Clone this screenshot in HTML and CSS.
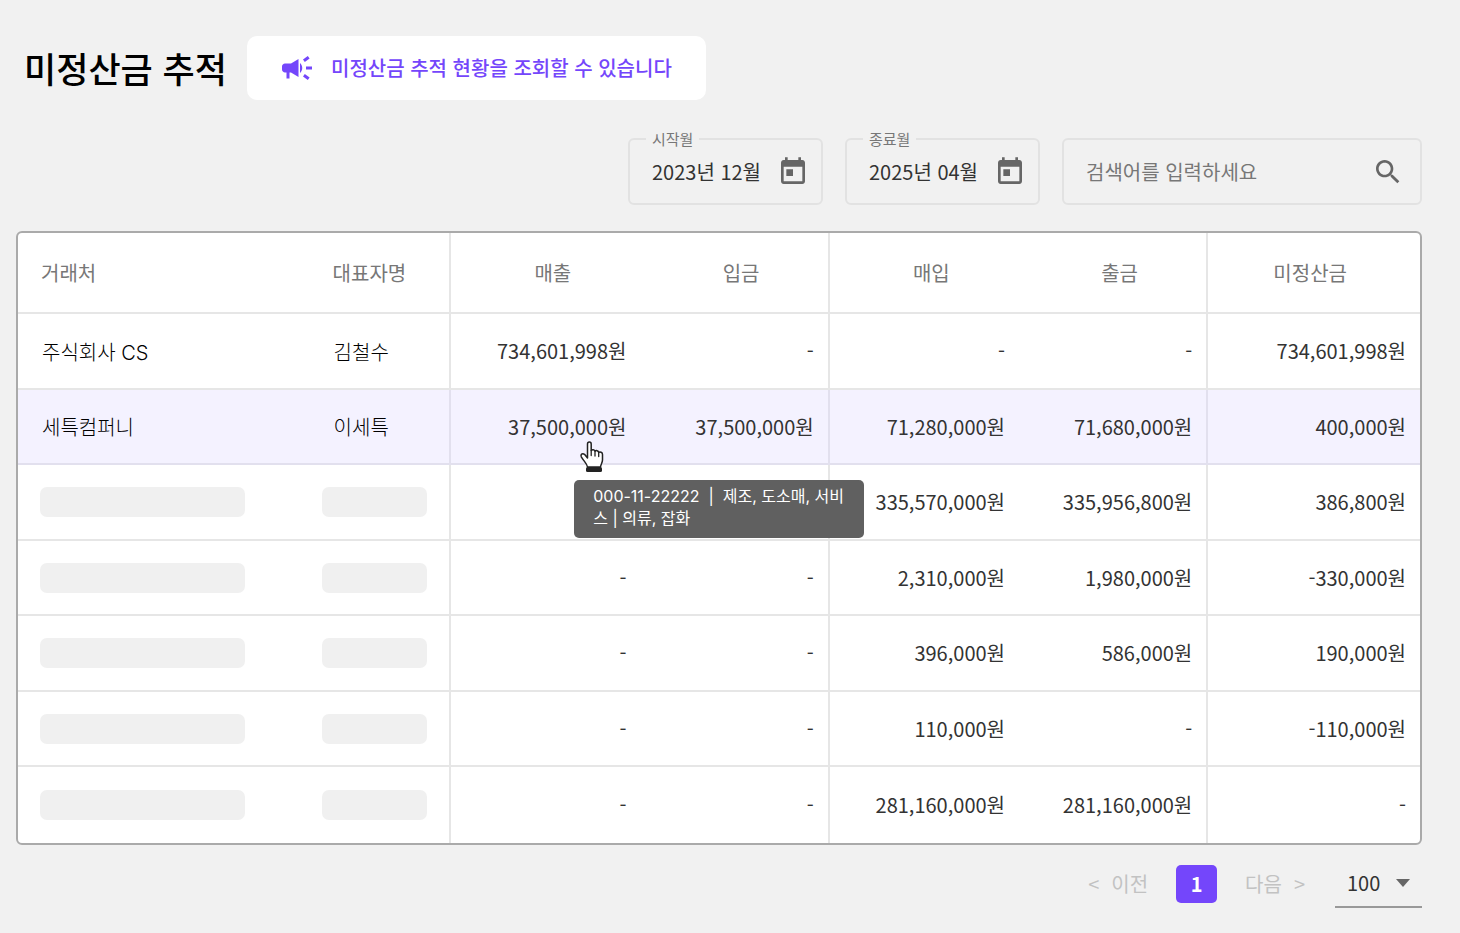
FILE: index.html
```html
<!DOCTYPE html>
<html lang="ko">
<head>
    <meta charset="UTF-8">
    <meta name="viewport" content="width=device-width, initial-scale=1.0">
    <title>미정산금 추적</title>
    <link rel="stylesheet" href="styles.css">
</head>
<body>
    <main class="page">
        <header class="page-header">
            <h1>미정산금 추적</h1>
            <p class="notice">
                <svg class="notice-icon" viewBox="0 0 24 24" fill="currentColor" aria-hidden="true">
                    <path d="M18 11v2h4v-2h-4zm-2 6.61c.96.71 2.21 1.65 3.2 2.39.4-.53.8-1.07 1.2-1.6-.99-.74-2.24-1.68-3.2-2.4-.4.54-.8 1.08-1.2 1.61zM20.4 5.6c-.4-.53-.8-1.07-1.2-1.6-.99.74-2.24 1.68-3.2 2.4.4.53.8 1.07 1.2 1.6.96-.72 2.21-1.65 3.2-2.4zM4 9c-1.1 0-2 .9-2 2v2c0 1.1.9 2 2 2h1v4h2v-4h1l5 3V6L8 9H4zm11.5 3c0-1.33-.58-2.53-1.5-3.35v6.69c.92-.81 1.5-2.01 1.5-3.34z"></path>
                </svg>
                <span>미정산금 추적 현황을 조회할 수 있습니다</span>
            </p>
        </header>

        <form class="filters">
            <div class="field field-month">
                <label for="start-month">시작월</label>
                <input type="text" id="start-month" value="2023년 12월">
                <button type="button" class="icon-button" aria-label="시작월 선택">
                    <svg viewBox="0 0 24 24" fill="currentColor">
                        <path d="M19 3h-1V1h-2v2H8V1H6v2H5c-1.11 0-1.99.9-1.99 2L3 19c0 1.1.89 2 2 2h14c1.1 0 2-.9 2-2V5c0-1.1-.9-2-2-2zm0 16H5V8h14v11zM7 10h5v5H7z"></path>
                    </svg>
                </button>
            </div>
            <div class="field field-month">
                <label for="end-month">종료월</label>
                <input type="text" id="end-month" value="2025년 04월">
                <button type="button" class="icon-button" aria-label="종료월 선택">
                    <svg viewBox="0 0 24 24" fill="currentColor">
                        <path d="M19 3h-1V1h-2v2H8V1H6v2H5c-1.11 0-1.99.9-1.99 2L3 19c0 1.1.89 2 2 2h14c1.1 0 2-.9 2-2V5c0-1.1-.9-2-2-2zm0 16H5V8h14v11zM7 10h5v5H7z"></path>
                    </svg>
                </button>
            </div>
            <div class="field field-search">
                <input type="text" id="keyword" placeholder="검색어를 입력하세요" aria-label="검색어">
                <button type="button" class="icon-button" aria-label="검색">
                    <svg viewBox="0 0 24 24" fill="currentColor">
                        <path d="M15.5 14h-.79l-.28-.27C15.41 12.59 16 11.11 16 9.5 16 5.91 13.09 3 9.5 3S3 5.91 3 9.5 5.91 16 9.5 16c1.61 0 3.09-.59 4.23-1.57l.27.28v.79l5 4.99L20.49 19l-4.99-5zm-6 0C7.01 14 5 11.99 5 9.5S7.01 5 9.5 5 14 7.01 14 9.5 11.99 14 9.5 14z"></path>
                    </svg>
                </button>
            </div>
        </form>

        <div class="table-box">
            <table>
                <colgroup>
                    <col class="col-company">
                    <col class="col-owner">
                    <col class="col-amount">
                    <col class="col-amount">
                    <col class="col-amount">
                    <col class="col-amount">
                    <col class="col-balance">
                </colgroup>
                <thead>
                    <tr>
                        <th class="name">거래처</th>
                        <th class="name group-end">대표자명</th>
                        <th>매출</th>
                        <th class="group-end">입금</th>
                        <th>매입</th>
                        <th class="group-end">출금</th>
                        <th>미정산금</th>
                    </tr>
                </thead>
                <tbody>
                    <tr>
                        <td class="name">주식회사 CS</td>
                        <td class="name group-end">김철수</td>
                        <td>734,601,998원</td>
                        <td class="group-end">-</td>
                        <td>-</td>
                        <td class="group-end">-</td>
                        <td>734,601,998원</td>
                    </tr>
                    <tr class="active">
                        <td class="name">세특컴퍼니</td>
                        <td class="name group-end">이세특</td>
                        <td class="hovered">
                            37,500,000원
                            <svg class="pointer" viewBox="0 0 26 32" aria-hidden="true">
                                <path d="M8.500 17V3.200c0-2.800 3.700-2.800 3.700 0v6.300c.8-1.300 3.400-1.100 3.800.7 1-1.100 3.400-.7 3.700 1.200 1.300-.9 3.800-.2 3.800 2v5.600c0 2.500-1.600 4-2 7H8.500C8 22.500 5 20.500 2.300 15.800c-1-2 .9-4.200 3.200-2.500z" fill="#fff" stroke="#222" stroke-width="1.500" stroke-linejoin="round"></path>
                                <path d="M12.200 9.500v5M16 10.500v4.500M19.700 11.500v4" fill="none" stroke="#222" stroke-width="1.300" stroke-linecap="round"></path>
                                <rect x="7" y="26" width="16" height="5" rx="1.500" fill="#222"></rect>
                            </svg>
                            <div class="tooltip" role="tooltip">000-11-22222 &nbsp;|&nbsp; 제조, 도소매, 서비<br>스 | 의류, 잡화</div>
                        </td>
                        <td class="group-end">37,500,000원</td>
                        <td>71,280,000원</td>
                        <td class="group-end">71,680,000원</td>
                        <td>400,000원</td>
                    </tr>
                    <tr>
                        <td class="masked"><span class="bar"></span></td>
                        <td class="masked group-end"><span class="bar"></span></td>
                        <td></td>
                        <td class="group-end"></td>
                        <td>335,570,000원</td>
                        <td class="group-end">335,956,800원</td>
                        <td>386,800원</td>
                    </tr>
                    <tr>
                        <td class="masked"><span class="bar"></span></td>
                        <td class="masked group-end"><span class="bar"></span></td>
                        <td>-</td>
                        <td class="group-end">-</td>
                        <td>2,310,000원</td>
                        <td class="group-end">1,980,000원</td>
                        <td>-330,000원</td>
                    </tr>
                    <tr>
                        <td class="masked"><span class="bar"></span></td>
                        <td class="masked group-end"><span class="bar"></span></td>
                        <td>-</td>
                        <td class="group-end">-</td>
                        <td>396,000원</td>
                        <td class="group-end">586,000원</td>
                        <td>190,000원</td>
                    </tr>
                    <tr>
                        <td class="masked"><span class="bar"></span></td>
                        <td class="masked group-end"><span class="bar"></span></td>
                        <td>-</td>
                        <td class="group-end">-</td>
                        <td>110,000원</td>
                        <td class="group-end">-</td>
                        <td>-110,000원</td>
                    </tr>
                    <tr>
                        <td class="masked"><span class="bar"></span></td>
                        <td class="masked group-end"><span class="bar"></span></td>
                        <td>-</td>
                        <td class="group-end">-</td>
                        <td>281,160,000원</td>
                        <td class="group-end">281,160,000원</td>
                        <td>-</td>
                    </tr>
                </tbody>
            </table>
        </div>

        <nav class="pagination" aria-label="페이지">
            <button type="button" class="page-move" disabled><span>&lt;</span><span>이전</span></button>
            <button type="button" class="page-number" aria-current="page">1</button>
            <button type="button" class="page-move" disabled><span>다음</span><span>&gt;</span></button>
            <div class="page-size">
                <select aria-label="페이지당 행 수">
                    <option>50</option>
                    <option selected>100</option>
                </select>
                <svg class="page-size-arrow" viewBox="0 0 14 8" aria-hidden="true">
                    <path d="M0 0h14L7 8z" fill="currentColor"></path>
                </svg>
            </div>
        </nav>
    </main>
</body>
</html>
```
FILE: styles.css
```css
* {
    margin: 0;
    padding: 0;
    box-sizing: border-box;
}

body {
    background: #f1f1f1;
    color: #333;
    font-family: 'Noto Sans CJK KR', sans-serif;
    font-size: 20px;
    line-height: 30px;
}

button,
input,
select {
    border: none;
    background: none;
    color: inherit;
    font: inherit;
    outline: none;
}

.page {
    padding: 36px 38px 24px 16px;
}

.page-header {
    display: flex;
    align-items: center;
    gap: 20px;
    padding-left: 8px;
}

h1 {
    color: #000;
    font-size: 35px;
    font-weight: 500;
    line-height: 64px;
}

.notice {
    display: flex;
    align-items: center;
    gap: 16px;
    height: 64px;
    padding: 0 34px 0 32px;
    border-radius: 10px;
    background: #fff;
    color: #7446fb;
    font-weight: 500;
}

.notice-icon {
    width: 36px;
    height: 36px;
}

/* Filters */
.filters {
    display: flex;
    justify-content: flex-end;
    gap: 22px;
    margin-top: 38px;
}

.field {
    position: relative;
    display: flex;
    align-items: center;
    height: 67px;
    padding: 0 12px 0 22px;
    border: 2px solid #e2e2e2;
    border-radius: 6px;
}

.field label {
    position: absolute;
    top: -12px;
    left: 16px;
    padding: 0 6px;
    background: #f1f1f1;
    color: #777;
    font-size: 15px;
    line-height: 22px;
}

.field input {
    flex: 1;
    min-width: 0;
    height: 30px;
}

.field-month {
    width: 195px;
}

.field-search {
    width: 360px;
    padding-right: 16px;
}

.field input::placeholder {
    color: #777;
    opacity: 1;
}

.icon-button {
    width: 32px;
    height: 32px;
    color: #666;
    cursor: pointer;
}

.icon-button svg {
    display: block;
}

/* Table */
.table-box {
    margin-top: 26px;
    border: 2px solid #aaa;
    border-radius: 6px;
    background: #fff;
    overflow: hidden;
}

table {
    width: 100%;
    table-layout: fixed;
    border-collapse: separate;
    border-spacing: 0;
}

.col-company {
    width: 20.8%;
}

.col-owner {
    width: 10.1%;
}

.col-amount {
    width: 13.5%;
}

.col-balance {
    width: 15.1%;
}

th {
    height: 81px;
    padding: 0 10px 0 24px;
    border-bottom: 2px solid #e6e6e6;
    color: #777;
    font-weight: 400;
}

th:last-child {
    padding: 0 20px 0 12px;
}

td {
    height: 76px;
    padding: 0 14px;
    border-bottom: 2px solid #e6e6e6;
    text-align: right;
}

tbody tr:nth-child(even) td {
    height: 75px;
}

tbody tr:last-child td {
    border-bottom: none;
}

.group-end {
    border-right: 2px solid #e6e6e6;
}

th.name {
    padding: 0 0 0 23px;
    text-align: left;
}

td.name {
    padding: 3px 0 0 24px;
    color: #000;
    font-family: Inter, 'Noto Sans CJK KR', sans-serif;
    font-weight: 300;
    text-align: left;
}

.active td {
    border-color: #e2e0ee;
    background: #f4f2ff;
}

td.masked {
    padding: 0 22px;
}

td.masked.group-end {
    padding: 0 22px 0 12px;
}

.bar {
    display: block;
    max-width: 205px;
    height: 30px;
    border-radius: 7px;
    background: #f0f0f0;
}

/* Hovered amount with its tooltip */
.hovered {
    position: relative;
}

.pointer {
    position: absolute;
    top: 51px;
    left: 128px;
    z-index: 2;
    width: 26px;
    height: 32px;
}

.tooltip {
    position: absolute;
    top: 90px;
    left: 123px;
    z-index: 1;
    width: 290px;
    padding: 5px 19px 9px;
    border-radius: 5px;
    background: #606060;
    color: #fff;
    font-family: Inter, 'Noto Sans CJK KR', sans-serif;
    font-size: 16px;
    font-weight: 400;
    line-height: 22px;
    text-align: left;
    white-space: nowrap;
}

/* Pagination */
.pagination {
    display: flex;
    justify-content: flex-end;
    align-items: center;
    margin-top: 15px;
}

.page-move {
    display: flex;
    gap: 12px;
    color: #c2c2c2;
}

.page-number {
    width: 41px;
    height: 38px;
    margin: 0 28px;
    border-radius: 5px;
    background: #7446fb;
    color: #fff;
    font-weight: 700;
}

.page-size {
    position: relative;
    width: 87px;
    height: 48px;
    margin-left: 30px;
    border-bottom: 2px solid #999;
}

.page-size select {
    width: 100%;
    height: 46px;
    padding-left: 12px;
    appearance: none;
}

.page-size-arrow {
    position: absolute;
    top: 19px;
    right: 12px;
    width: 14px;
    height: 8px;
    color: #666;
    pointer-events: none;
}
```
